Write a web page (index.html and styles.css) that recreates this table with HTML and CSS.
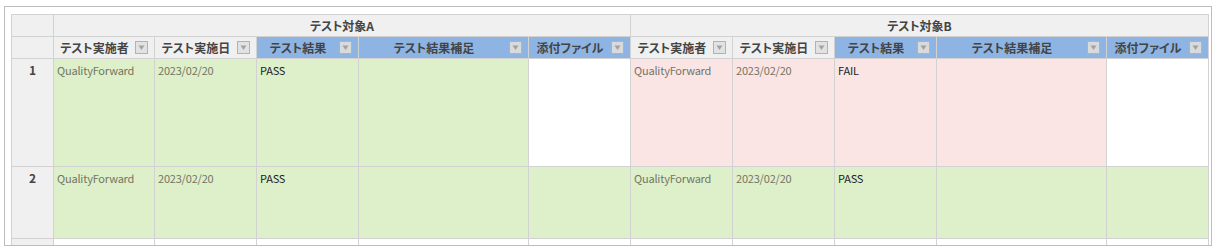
FILE: index.html
```html
<!DOCTYPE html>
<html lang="ja">
<head>
<meta charset="utf-8">
<link rel="stylesheet" href="styles.css">
</head>
<body>
<div class="frame">
  <div class="grid" role="table">
    <!-- header row 1 -->
    <div class="hd"></div>
    <div class="hd group span5">テスト対象A</div>
    <div class="hd group span5">テスト対象B</div>

    <!-- header row 2 -->
    <div class="hd"></div>
    <div class="hd col"><span class="ht">テスト実施者</span><svg class="flt" viewBox="0 0 13 13" width="13" height="13"><rect x="0.5" y="0.5" width="12" height="12" fill="#e2e2e2" stroke="#b2b2b2"/><polygon points="3.5,4.5 9.5,4.5 6.5,9" fill="#a2a2a2"/></svg></div>
    <div class="hd col"><span class="ht">テスト実施日</span><svg class="flt" viewBox="0 0 13 13" width="13" height="13"><rect x="0.5" y="0.5" width="12" height="12" fill="#e2e2e2" stroke="#b2b2b2"/><polygon points="3.5,4.5 9.5,4.5 6.5,9" fill="#a2a2a2"/></svg></div>
    <div class="hd col blue"><span class="ht">テスト結果</span><svg class="flt" viewBox="0 0 13 13" width="13" height="13"><rect x="0.5" y="0.5" width="12" height="12" fill="#dadada" stroke="#a9b3c1"/><polygon points="3.5,4.5 9.5,4.5 6.5,9" fill="#a2a2a2"/></svg></div>
    <div class="hd col blue"><span class="ht">テスト結果補足</span><svg class="flt" viewBox="0 0 13 13" width="13" height="13"><rect x="0.5" y="0.5" width="12" height="12" fill="#dadada" stroke="#a9b3c1"/><polygon points="3.5,4.5 9.5,4.5 6.5,9" fill="#a2a2a2"/></svg></div>
    <div class="hd col blue"><span class="ht">添付ファイル</span><svg class="flt" viewBox="0 0 13 13" width="13" height="13"><rect x="0.5" y="0.5" width="12" height="12" fill="#dadada" stroke="#a9b3c1"/><polygon points="3.5,4.5 9.5,4.5 6.5,9" fill="#a2a2a2"/></svg></div>
    <div class="hd col"><span class="ht">テスト実施者</span><svg class="flt" viewBox="0 0 13 13" width="13" height="13"><rect x="0.5" y="0.5" width="12" height="12" fill="#e2e2e2" stroke="#b2b2b2"/><polygon points="3.5,4.5 9.5,4.5 6.5,9" fill="#a2a2a2"/></svg></div>
    <div class="hd col"><span class="ht">テスト実施日</span><svg class="flt" viewBox="0 0 13 13" width="13" height="13"><rect x="0.5" y="0.5" width="12" height="12" fill="#e2e2e2" stroke="#b2b2b2"/><polygon points="3.5,4.5 9.5,4.5 6.5,9" fill="#a2a2a2"/></svg></div>
    <div class="hd col blue"><span class="ht">テスト結果</span><svg class="flt" viewBox="0 0 13 13" width="13" height="13"><rect x="0.5" y="0.5" width="12" height="12" fill="#dadada" stroke="#a9b3c1"/><polygon points="3.5,4.5 9.5,4.5 6.5,9" fill="#a2a2a2"/></svg></div>
    <div class="hd col blue"><span class="ht">テスト結果補足</span><svg class="flt" viewBox="0 0 13 13" width="13" height="13"><rect x="0.5" y="0.5" width="12" height="12" fill="#dadada" stroke="#a9b3c1"/><polygon points="3.5,4.5 9.5,4.5 6.5,9" fill="#a2a2a2"/></svg></div>
    <div class="hd col blue"><span class="ht">添付ファイル</span><svg class="flt" viewBox="0 0 13 13" width="13" height="13"><rect x="0.5" y="0.5" width="12" height="12" fill="#dadada" stroke="#a9b3c1"/><polygon points="3.5,4.5 9.5,4.5 6.5,9" fill="#a2a2a2"/></svg></div>

    <!-- row 1 -->
    <div class="num">1</div>
    <div class="cell pass sub">QualityForward</div>
    <div class="cell pass sub">2023/02/20</div>
    <div class="cell pass res">PASS</div>
    <div class="cell pass"></div>
    <div class="cell blank"></div>
    <div class="cell fail sub">QualityForward</div>
    <div class="cell fail sub">2023/02/20</div>
    <div class="cell fail res">FAIL</div>
    <div class="cell fail"></div>
    <div class="cell blank"></div>

    <!-- row 2 -->
    <div class="num">2</div>
    <div class="cell pass sub">QualityForward</div>
    <div class="cell pass sub">2023/02/20</div>
    <div class="cell pass res">PASS</div>
    <div class="cell pass"></div>
    <div class="cell pass"></div>
    <div class="cell pass sub">QualityForward</div>
    <div class="cell pass sub">2023/02/20</div>
    <div class="cell pass res">PASS</div>
    <div class="cell pass"></div>
    <div class="cell pass"></div>

    <!-- row 3 (partially visible) -->
    <div class="num">3</div>
    <div class="cell blank"></div>
    <div class="cell blank"></div>
    <div class="cell blank"></div>
    <div class="cell blank"></div>
    <div class="cell blank"></div>
    <div class="cell blank"></div>
    <div class="cell blank"></div>
    <div class="cell blank"></div>
    <div class="cell blank"></div>
    <div class="cell blank"></div>
  </div>
</div>
</body>
</html>
```

FILE: styles.css
```css
html, body {
  margin: 0;
  padding: 0;
  background: #ffffff;
}

body {
  font-family: "Noto Sans CJK JP", "Noto Sans", sans-serif;
  color: #333;
}

.frame {
  box-sizing: border-box;
  margin: 6px 0 0 4px;
  width: 1208px;
  height: 240px;
  border: 1px solid #bdbdbd;
  padding: 7px 0 0 6px;
  overflow: hidden;
}

.grid {
  display: grid;
  width: max-content;
  grid-template-columns: 41px 100px 101px 101px 169px 101px 101px 101px 101px 169px 101px;
  grid-template-rows: 21px 21px 107px 71px 20px;
  gap: 1px;
  padding: 1px;
  background: #d2d2d2;
}

.hd {
  background: #f0f0f0;
  color: #444;
  font-weight: bold;
  font-size: 12px;
  font-feature-settings: "palt" 1;
  line-height: 16px;
  white-space: nowrap;
  overflow: hidden;
}

.group {
  display: flex;
  align-items: center;
  justify-content: center;
}

.span5 { grid-column: span 5; }

.col {
  display: flex;
  align-items: center;
  padding-right: 6px;
}

.col.blue { background: #8db4e3; }

.ht {
  flex: 1;
  text-align: center;
}

.flt {
  display: block;
  flex: none;
}

.num {
  background: #f0f0f0;
  color: #444;
  font-weight: bold;
  font-size: 12px;
  line-height: 16px;
  text-align: center;
  padding-top: 3px;
}

.cell {
  font-size: 11px;
  letter-spacing: -0.2px;
  line-height: 16px;
  padding: 3px 3px 0;
  white-space: nowrap;
  overflow: hidden;
}

.pass { background: #ddf0c9; }
.fail { background: #fae5e4; }
.blank { background: #ffffff; }

.sub { color: #747464; }
.res { color: #222; }
```
